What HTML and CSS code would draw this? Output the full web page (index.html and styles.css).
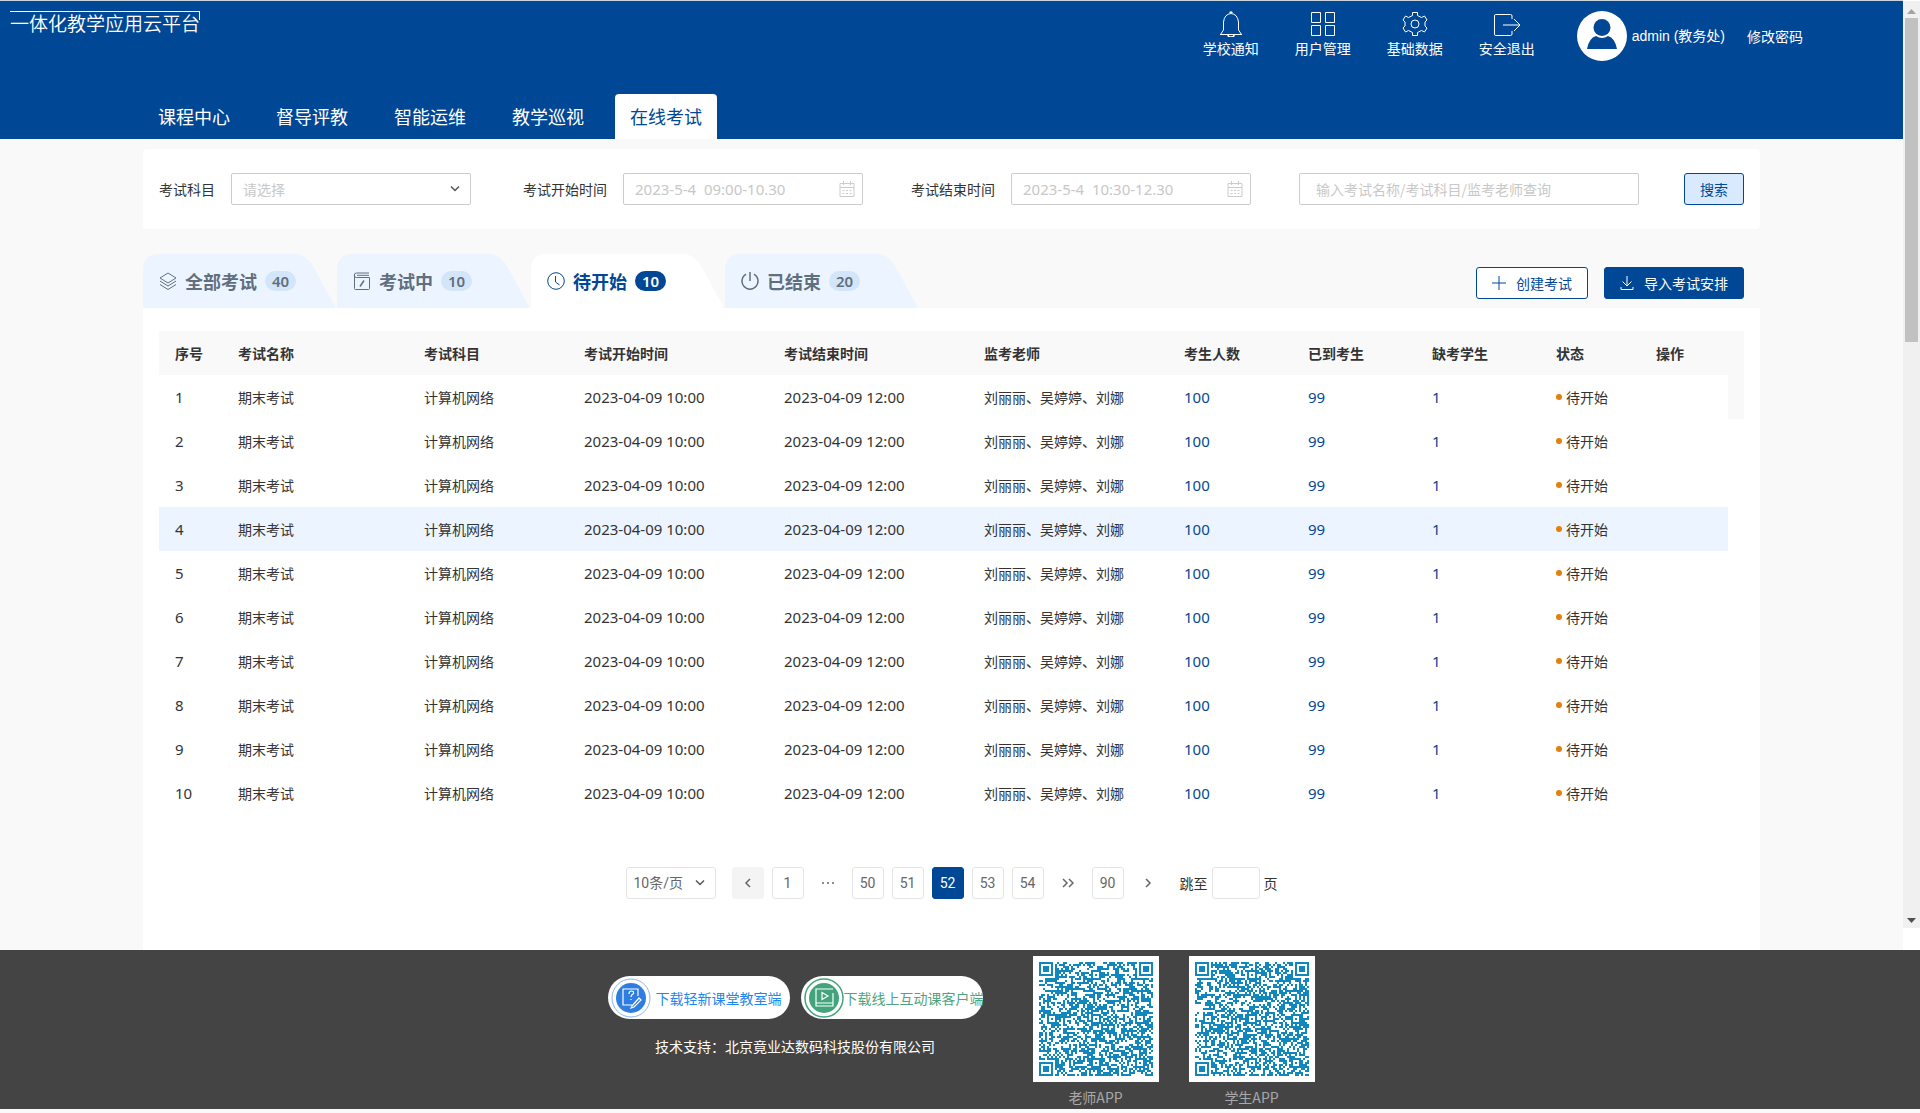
FILE: index.html
```html
<!DOCTYPE html>
<html lang="zh-CN">
<head>
<meta charset="utf-8">
<meta name="viewport" content="width=device-width, initial-scale=1">
<title>一体化教学应用云平台</title>
<link rel="stylesheet" href="styles.css">
</head>
<body>
<div class="shell">
  <div class="page">
    <header class="header">
      <div class="topbar">
        <h1 class="logo">一体化教学应用云平台</h1>
        <div class="topbar-right">
          <div class="shortcuts">
            <a class="shortcut" href="#">
              <svg width="26" height="26" viewBox="0 0 26 26"><path d="M2 23.500h22M5.500 19V11q1-8 7.500-8.500 6.500.5 7.500 8.500v8l3 4.500M5.500 19l-3 4.500"/><path d="M10 24a3 2 0 0 0 6 0M12 2a1 1 0 0 1 2 0" stroke-width="1.500"/></svg>
              <span>学校通知</span>
            </a>
            <a class="shortcut" href="#">
              <svg width="26" height="26" viewBox="0 0 26 26"><path d="M1.500 1.500h9v10h-9zM15.500 1.500h9v10h-9zM1.500 14.500h9v10h-9zM15.500 14.500h9v10h-9z"/></svg>
              <span>用户管理</span>
            </a>
            <a class="shortcut" href="#">
              <svg width="26" height="26" viewBox="0 0 26 26"><path d="M10.500 1.500h5v3l4 2 3-1.500 2.500 4-2 2v4l2 2-2.500 4-3-1.500-4 2v3h-5v-3l-4-2-3 1.500-2.500-4 2-2v-4l-2-2 2.500-4 3 1.500 4-2z" stroke-linejoin="round"/><circle cx="13" cy="13" r="4"/></svg>
              <span>基础数据</span>
            </a>
            <a class="shortcut" href="#">
              <svg width="28" height="26" viewBox="0 0 28 26"><path d="M19 8V5q0-1.500-1.500-1.500h-15Q1.500 3.500 1.500 5v18q0 1.500 1 1.500h15q1.500 0 1.500-1.500v-3M10 14h16.500M21 8l6 6-6 6"/></svg>
              <span>安全退出</span>
            </a>
          </div>
          <div class="account">
            <svg class="avatar" width="50" height="50" viewBox="0 0 50 50"><circle cx="25" cy="25" r="25" fill="#fff"/><circle cx="25" cy="16.500" r="8.500" fill="#004896"/><path d="M10 38q2-11 9-13 6 4 12 0 7 2 9 13z" fill="#004896"/></svg>
            <span class="account-name">admin (教务处)</span>
            <a href="#">修改密码</a>
          </div>
        </div>
      </div>
      <nav class="nav">
        <a href="#">课程中心</a>
        <a href="#">督导评教</a>
        <a href="#">智能运维</a>
        <a href="#">教学巡视</a>
        <a class="is-active" href="#" aria-current="page">在线考试</a>
      </nav>
    </header>

    <main class="content">
      <form class="filters">
        <div class="field field-subject">
          <label for="subject">考试科目</label>
          <span class="control">
            <select id="subject"><option>请选择</option></select>
            <svg class="chevron" width="10" height="8" viewBox="0 0 10 8"><path d="M1 1.500l4 4 4-4"/></svg>
          </span>
        </div>
        <div class="field">
          <label for="start">考试开始时间</label>
          <span class="control">
            <input id="start" type="text" placeholder="2023-5-4  09:00-10.30">
            <svg class="calendar" width="16" height="16" viewBox="0 0 16 16"><path d="M1 2.500h14v13H1zM1 6.500h14M4.500 0v4M11.500 0v4"/><path d="M3.500 9.500h9M3.500 12.500h9" stroke-dasharray="2 1.500"/></svg>
          </span>
        </div>
        <div class="field">
          <label for="end">考试结束时间</label>
          <span class="control">
            <input id="end" type="text" placeholder="2023-5-4  10:30-12.30">
            <svg class="calendar" width="16" height="16" viewBox="0 0 16 16"><path d="M1 2.500h14v13H1zM1 6.500h14M4.500 0v4M11.500 0v4"/><path d="M3.500 9.500h9M3.500 12.500h9" stroke-dasharray="2 1.500"/></svg>
          </span>
        </div>
        <div class="search">
          <input class="keyword" type="text" aria-label="关键字" placeholder="输入考试名称/考试科目/监考老师查询">
          <button class="btn btn-search" type="button">搜索</button>
        </div>
      </form>

      <div class="toolbar">
        <div class="tabs" role="tablist">
          <button class="tab" type="button" role="tab">
            <svg width="18" height="18" viewBox="0 0 18 18"><path d="M9 1l8 5-8 5-8-5zM1 9l8 5 8-5M1 12.500l8 5 8-5"/></svg>
            全部考试<span class="badge">40</span>
          </button>
          <button class="tab" type="button" role="tab">
            <svg width="18" height="18" viewBox="0 0 18 18"><path d="M16 1H3.500a2 2 0 0 0 0 4.500H16.500v11q0 1-1 1h-13q-1 0-1-1V3M4 3.300h12"/><path d="M11 8.500l-4 6" stroke-width="1.500"/></svg>
            考试中<span class="badge">10</span>
          </button>
          <button class="tab is-active" type="button" role="tab" aria-selected="true">
            <svg width="18" height="18" viewBox="0 0 18 18"><circle cx="9" cy="9" r="8.300"/><path d="M8.500 4v6l4 3"/></svg>
            待开始<span class="badge">10</span>
          </button>
          <button class="tab" type="button" role="tab">
            <svg width="18" height="18" viewBox="0 0 18 18"><path d="M9 0v9M5 2.200a8 8 0 1 0 8 0" stroke-width="1.500"/></svg>
            已结束<span class="badge">20</span>
          </button>
        </div>
        <div class="actions">
          <button class="btn btn-outline" type="button">
            <svg width="14" height="14" viewBox="0 0 14 14"><path d="M7 0v14M0 7h14"/></svg>创建考试
          </button>
          <button class="btn btn-primary" type="button">
            <svg width="14" height="14" viewBox="0 0 14 14"><path d="M7 0v10M2.500 5.500L7 10l4.500-4.500M1 11v2.500h12V11"/></svg>导入考试安排
          </button>
        </div>
      </div>

      <section class="panel">
        <div class="table-wrap">
          <table class="exams">
            <colgroup>
              <col class="c-no"><col class="c-name"><col class="c-subject"><col class="c-time"><col class="c-time"><col class="c-time"><col class="c-count"><col class="c-count"><col class="c-count"><col class="c-state"><col>
            </colgroup>
            <thead>
              <tr><th>序号</th><th>考试名称</th><th>考试科目</th><th>考试开始时间</th><th>考试结束时间</th><th>监考老师</th><th>考生人数</th><th>已到考生</th><th>缺考学生</th><th>状态</th><th>操作</th></tr>
            </thead>
            <tbody>
              <tr><td class="num">1</td><td>期末考试</td><td>计算机网络</td><td class="num">2023-04-09 10:00</td><td class="num">2023-04-09 12:00</td><td>刘丽丽、吴婷婷、刘娜</td><td class="num"><a href="#">100</a></td><td class="num"><a href="#">99</a></td><td class="num"><a href="#">1</a></td><td><span class="state">待开始</span></td><td></td></tr>
              <tr><td class="num">2</td><td>期末考试</td><td>计算机网络</td><td class="num">2023-04-09 10:00</td><td class="num">2023-04-09 12:00</td><td>刘丽丽、吴婷婷、刘娜</td><td class="num"><a href="#">100</a></td><td class="num"><a href="#">99</a></td><td class="num"><a href="#">1</a></td><td><span class="state">待开始</span></td><td></td></tr>
              <tr><td class="num">3</td><td>期末考试</td><td>计算机网络</td><td class="num">2023-04-09 10:00</td><td class="num">2023-04-09 12:00</td><td>刘丽丽、吴婷婷、刘娜</td><td class="num"><a href="#">100</a></td><td class="num"><a href="#">99</a></td><td class="num"><a href="#">1</a></td><td><span class="state">待开始</span></td><td></td></tr>
              <tr class="is-hover"><td class="num">4</td><td>期末考试</td><td>计算机网络</td><td class="num">2023-04-09 10:00</td><td class="num">2023-04-09 12:00</td><td>刘丽丽、吴婷婷、刘娜</td><td class="num"><a href="#">100</a></td><td class="num"><a href="#">99</a></td><td class="num"><a href="#">1</a></td><td><span class="state">待开始</span></td><td></td></tr>
              <tr><td class="num">5</td><td>期末考试</td><td>计算机网络</td><td class="num">2023-04-09 10:00</td><td class="num">2023-04-09 12:00</td><td>刘丽丽、吴婷婷、刘娜</td><td class="num"><a href="#">100</a></td><td class="num"><a href="#">99</a></td><td class="num"><a href="#">1</a></td><td><span class="state">待开始</span></td><td></td></tr>
              <tr><td class="num">6</td><td>期末考试</td><td>计算机网络</td><td class="num">2023-04-09 10:00</td><td class="num">2023-04-09 12:00</td><td>刘丽丽、吴婷婷、刘娜</td><td class="num"><a href="#">100</a></td><td class="num"><a href="#">99</a></td><td class="num"><a href="#">1</a></td><td><span class="state">待开始</span></td><td></td></tr>
              <tr><td class="num">7</td><td>期末考试</td><td>计算机网络</td><td class="num">2023-04-09 10:00</td><td class="num">2023-04-09 12:00</td><td>刘丽丽、吴婷婷、刘娜</td><td class="num"><a href="#">100</a></td><td class="num"><a href="#">99</a></td><td class="num"><a href="#">1</a></td><td><span class="state">待开始</span></td><td></td></tr>
              <tr><td class="num">8</td><td>期末考试</td><td>计算机网络</td><td class="num">2023-04-09 10:00</td><td class="num">2023-04-09 12:00</td><td>刘丽丽、吴婷婷、刘娜</td><td class="num"><a href="#">100</a></td><td class="num"><a href="#">99</a></td><td class="num"><a href="#">1</a></td><td><span class="state">待开始</span></td><td></td></tr>
              <tr><td class="num">9</td><td>期末考试</td><td>计算机网络</td><td class="num">2023-04-09 10:00</td><td class="num">2023-04-09 12:00</td><td>刘丽丽、吴婷婷、刘娜</td><td class="num"><a href="#">100</a></td><td class="num"><a href="#">99</a></td><td class="num"><a href="#">1</a></td><td><span class="state">待开始</span></td><td></td></tr>
              <tr><td class="num">10</td><td>期末考试</td><td>计算机网络</td><td class="num">2023-04-09 10:00</td><td class="num">2023-04-09 12:00</td><td>刘丽丽、吴婷婷、刘娜</td><td class="num"><a href="#">100</a></td><td class="num"><a href="#">99</a></td><td class="num"><a href="#">1</a></td><td><span class="state">待开始</span></td><td></td></tr>
            </tbody>
          </table>
          <div class="gutter"></div>
        </div>

        <div class="pager">
          <span class="page-size">
            <select aria-label="每页条数"><option>10条/页</option></select>
            <svg class="chevron" width="10" height="8" viewBox="0 0 10 8"><path d="M1 1.500l4 4 4-4"/></svg>
          </span>
          <div class="pages">
            <button class="pg is-prev" type="button" aria-label="上一页"><svg width="8" height="10" viewBox="0 0 8 10"><path d="M6 1L2 5l4 4"/></svg></button>
            <button class="pg" type="button">1</button>
            <span class="pg is-plain"><svg width="14" height="4" viewBox="0 0 14 4"><path d="M1 2h2M6 2h2M11 2h2"/></svg></span>
            <button class="pg" type="button">50</button>
            <button class="pg" type="button">51</button>
            <button class="pg is-current" type="button" aria-current="page">52</button>
            <button class="pg" type="button">53</button>
            <button class="pg" type="button">54</button>
            <button class="pg is-plain" type="button" aria-label="向后五页"><svg width="12" height="10" viewBox="0 0 12 10"><path d="M1 1l4 4-4 4M7 1l4 4-4 4"/></svg></button>
            <button class="pg" type="button">90</button>
            <button class="pg is-plain" type="button" aria-label="下一页"><svg width="8" height="10" viewBox="0 0 8 10"><path d="M2 1l4 4-4 4"/></svg></button>
          </div>
          <label class="jump">跳至<input type="text">页</label>
        </div>
      </section>
    </main>
  </div>

  <div class="scrollbar" aria-hidden="true">
    <div class="scroll-track">
      <svg width="9" height="5" viewBox="0 0 9 5"><path d="M0 5h9L4.500 0z" fill="#a3a3a3"/></svg>
      <div class="scroll-thumb"></div>
      <svg width="9" height="5" viewBox="0 0 9 5"><path d="M0 0h9L4.500 5z" fill="#505050"/></svg>
    </div>
  </div>
</div>

<footer class="footer">
  <div class="footer-main">
    <div class="downloads">
      <a class="download is-blue" href="#">
        <svg width="40" height="40" viewBox="0 0 40 40"><circle cx="20" cy="20" r="19" fill="none" stroke="#8ab4ee"/><circle cx="20" cy="20" r="15" fill="#2f7de1"/><g fill="none" stroke="#fff" stroke-width="1.200"><path d="M27 18v-7H12v16h9M18 16q0-3 2.500-3t2 2.500q-2.500 1.500-2.500 3.500M20 21v1"/><path d="M21 28l7-8 2 2-7 7-3 1z"/></g></svg>
        <span>下载轻新课堂教室端</span>
      </a>
      <a class="download is-green" href="#">
        <svg width="40" height="40" viewBox="0 0 40 40"><circle cx="20" cy="20" r="19" fill="none" stroke="#43a47b" stroke-width="1.500"/><circle cx="20" cy="20" r="15" fill="#43a47b"/><g fill="none" stroke="#fff" stroke-width="1.200"><path d="M29 11H12v17h17V15M12 25h17M18 14.500v7l6-3.500z"/></g></svg>
        <span>下载线上互动课客户端</span>
      </a>
    </div>
    <p class="support">技术支持：北京竟业达数码科技股份有限公司</p>
  </div>
  <div class="apps">
    <figure class="app">
      <svg class="qr" viewBox="0 0 57 57" data-seed="7" role="img" aria-label="老师APP 二维码"></svg>
      <figcaption>老师APP</figcaption>
    </figure>
    <figure class="app">
      <svg class="qr" viewBox="0 0 57 57" data-seed="29" role="img" aria-label="学生APP 二维码"></svg>
      <figcaption>学生APP</figcaption>
    </figure>
  </div>
</footer>
<script src="qr.js"></script>
</body>
</html>
```
FILE: styles.css
```css
* { box-sizing: border-box; }

body {
  margin: 0;
  background: #faf8f8;
  color: #333;
  font: 14px/20px "Noto Sans CJK SC", sans-serif;
}

a { color: inherit; text-decoration: none; }
button, input, select { font: inherit; color: inherit; margin: 0; }
button { cursor: pointer; }
svg { flex: none; fill: none; stroke: currentColor; }

.shell { display: flex; background: #fff; }
.page { flex: 1; min-width: 0; background: #f9f9f9; }

/* header */
.header {
  display: flex;
  flex-direction: column;
  justify-content: space-between;
  height: 139px;
  border-top: 1px solid #c9d3dc;
  background: #004896;
  color: #fff;
}
.topbar { display: flex; justify-content: space-between; padding: 10px 100px 0 10px; }
.logo {
  position: relative;
  align-self: flex-start;
  margin: 0;
  border-top: 1px solid #fff;
  font-size: 19px;
  font-weight: 350;
  line-height: 22px;
}
.logo::after {
  content: "";
  position: absolute;
  top: 0;
  right: 0;
  height: 8px;
  border-right: 1px solid #fff;
}
.topbar-right { display: flex; gap: 42px; }
.shortcuts { display: flex; gap: 36px; }
.shortcut { display: flex; flex-direction: column; align-items: center; gap: 1px; }
.account { display: flex; align-items: center; align-self: flex-start; }
.avatar { stroke: none; margin-right: 5px; }
.account-name { margin-right: 22px; font-family: "Liberation Sans", "Noto Sans CJK SC", sans-serif; }

.nav { display: flex; gap: 16px; padding: 0 143px; font-size: 18px; line-height: 45px; }
.nav a { padding: 0 15px; border-radius: 4px 4px 0 0; }
.nav .is-active { background: #fff; color: #004896; }

/* filters */
.content { padding: 10px 143px 0; }
.filters {
  display: flex;
  gap: 48px;
  padding: 24px 16px;
  border-radius: 4px;
  background: #fff;
}
.field { display: flex; align-items: center; gap: 16px; }
.field-subject { min-width: 316px; }
.control {
  display: flex;
  align-items: center;
  width: 240px;
  height: 32px;
  padding-right: 7px;
  border: 1px solid #ccc;
  border-radius: 2px;
}
.control input, .control select {
  flex: 1;
  min-width: 0;
  height: 30px;
  padding: 0 11px;
  border: 0;
  background: none;
  appearance: none;
  outline: 0;
}
.control select { color: #c8c8c8; }
.control input { font: 15px/20px "Noto Sans", "Noto Sans CJK SC", sans-serif; }
::placeholder { color: #c8c8c8; opacity: 1; }
.chevron { color: #555; stroke-width: 1.5px; }
.control .chevron { margin-right: 3px; }
.calendar { color: #ccc; }
.search { display: flex; flex: 1; gap: 45px; min-width: 0; }
.keyword {
  flex: 1;
  min-width: 0;
  height: 32px;
  padding: 0 16px;
  border: 1px solid #ccc;
  border-radius: 2px;
  background: #fff;
}
.btn {
  display: inline-flex;
  align-items: center;
  justify-content: center;
  gap: 10px;
  height: 32px;
  padding: 0 15px;
  border: 1px solid #004896;
  border-radius: 3px;
  white-space: nowrap;
}
.btn-search { width: 60px; background: #d9eaff; color: #004896; }
.btn-outline { background: #fff; color: #004896; }
.btn-primary { background: #004896; color: #fff; }

/* tabs */
.toolbar { display: flex; justify-content: space-between; align-items: flex-end; margin-top: 25px; }
.tabs { display: flex; gap: 1px; }
.tab {
  display: flex;
  align-items: center;
  gap: 8px;
  width: 193px;
  height: 54px;
  padding: 0 0 0 16px;
  border: 0;
  background: #ecf5ff;
  color: #5f6f7f;
  font-size: 18px;
  font-weight: 700;
  clip-path: path("M0 54V16Q0 0 16 0H152Q163 0 170 12L193 54Z");
}
.badge {
  padding: 0 7px;
  border-radius: 10px;
  background: #d3e5f9;
  font: 600 15px/20px "Noto Sans", sans-serif;
}
.tab.is-active { background: #fff; color: #004896; }
.tab.is-active .badge { background: #004896; color: #fff; }
.actions { display: flex; gap: 16px; padding: 0 16px 9px 0; }

/* table */
.panel { padding: 23px 16px 51px; background: #fff; }
.table-wrap { display: flex; }
.exams { flex: 1; width: 100%; border-collapse: collapse; table-layout: fixed; }
.exams th, .exams td { height: 44px; padding: 0 0 0 16px; text-align: left; white-space: nowrap; }
.exams th { background: #f9f9f9; font-weight: 700; }
.exams .num { font-family: "Noto Sans", sans-serif; font-size: 15px; }
.exams td a { color: #004896; }
.exams .is-hover { background: #ecf5ff; }
.c-no { width: 63px; }
.c-name { width: 186px; }
.c-subject { width: 160px; }
.c-time { width: 200px; }
.c-count { width: 124px; }
.c-state { width: 100px; }
.state { display: flex; align-items: center; gap: 4px; }
.state::before { content: ""; width: 6px; height: 6px; border-radius: 50%; background: #e57e0d; }
.gutter { width: 16px; height: 88px; background: #f9f9f9; }

/* pagination */
.pager { display: flex; justify-content: center; align-items: center; gap: 16px; margin-top: 52px; }
.page-size {
  display: flex;
  align-items: center;
  width: 90px;
  height: 32px;
  padding-right: 10px;
  border: 1px solid #e4e4e4;
  border-radius: 3px;
  color: #666;
}
.page-size select {
  flex: 1;
  min-width: 0;
  height: 30px;
  padding: 0 0 0 7px;
  border: 0;
  background: none;
  appearance: none;
  font-family: Roboto, "Noto Sans CJK SC", sans-serif;
}
.pages { display: flex; gap: 8px; }
.pg {
  display: flex;
  align-items: center;
  justify-content: center;
  width: 32px;
  height: 32px;
  padding: 0;
  border: 1px solid #e4e4e4;
  border-radius: 3px;
  background: #fff;
  color: #666;
  font-family: Roboto, sans-serif;
}
.pg svg { stroke-width: 1.5px; }
.pg.is-prev { border-color: #f4f4f4; background: #f4f4f4; }
.pg.is-plain { border-color: transparent; }
.pg.is-current { border-color: #004896; background: #004896; color: #fff; }
.jump { display: flex; align-items: center; gap: 4px; }
.jump input { width: 48px; height: 32px; border: 1px solid #e4e4e4; border-radius: 3px; }

/* scrollbar */
.scrollbar { width: 17px; padding: 1px 0 22px; }
.scroll-track {
  display: flex;
  flex-direction: column;
  align-items: center;
  height: 100%;
  padding: 8px 0 5px;
  background: #f0f0f0;
}
.scroll-track svg { stroke: none; }
.scroll-thumb { width: 13px; height: 324px; margin: 4px 0 auto; background: #c1c1c1; }

/* footer */
.footer {
  display: flex;
  justify-content: center;
  gap: 50px;
  padding: 6px 0 2px 2px;
  background: #444;
}
.downloads { display: flex; gap: 11px; margin-top: 20px; }
.download {
  display: flex;
  align-items: center;
  width: 182px;
  height: 43px;
  padding-left: 3px;
  border-radius: 22px;
  background: #fff;
  white-space: nowrap;
}
.download svg { stroke: none; }
.is-blue { gap: 5px; color: #2186ee; }
.is-green { color: #4fa47f; }
.support { margin: 17px 0 0; color: #fff; text-align: center; }
.apps { display: flex; gap: 30px; }
.app { margin: 0; color: #a8a8a8; text-align: center; }
.qr { display: block; width: 126px; height: 126px; padding: 6px; margin-bottom: 5px; background: #fff; stroke: none; }
```
FILE: qr.js
```js
// Fills each .qr element with a 57-module code: finders, alignment marks, data cells.
(function () {
  var N = 57;
  var marks = [6, 28, 50];

  function ring(x, y, cx, cy) {
    return Math.max(Math.abs(x - cx), Math.abs(y - cy));
  }

  function isDark(x, y, rand) {
    var noise = rand() < 0.54;
    var finders = [[3, 3], [N - 4, 3], [3, N - 4]];
    for (var i = 0; i < 3; i++) {
      var d = ring(x, y, finders[i][0], finders[i][1]);
      if (d <= 4) return d !== 2 && d !== 4;
    }
    for (var a = 0; a < 3; a++) {
      for (var b = 0; b < 3; b++) {
        var m = ring(x, y, marks[a], marks[b]);
        if (m <= 2) return m !== 1;
      }
    }
    return noise;
  }

  document.querySelectorAll('.qr').forEach(function (svg) {
    var seed = Number(svg.dataset.seed);
    function rand() {
      seed = (seed * 16807) % 2147483647;
      return seed / 2147483647;
    }
    for (var k = 0; k < 10; k++) rand();
    var d = '';
    for (var y = 0; y < N; y++) {
      for (var x = 0; x < N; x++) {
        if (isDark(x, y, rand)) d += 'M' + x + ' ' + y + 'h1v1h-1z';
      }
    }
    var path = document.createElementNS('http://www.w3.org/2000/svg', 'path');
    path.setAttribute('d', d);
    path.setAttribute('fill', '#1187bd');
    svg.appendChild(path);
  });
})();
```
